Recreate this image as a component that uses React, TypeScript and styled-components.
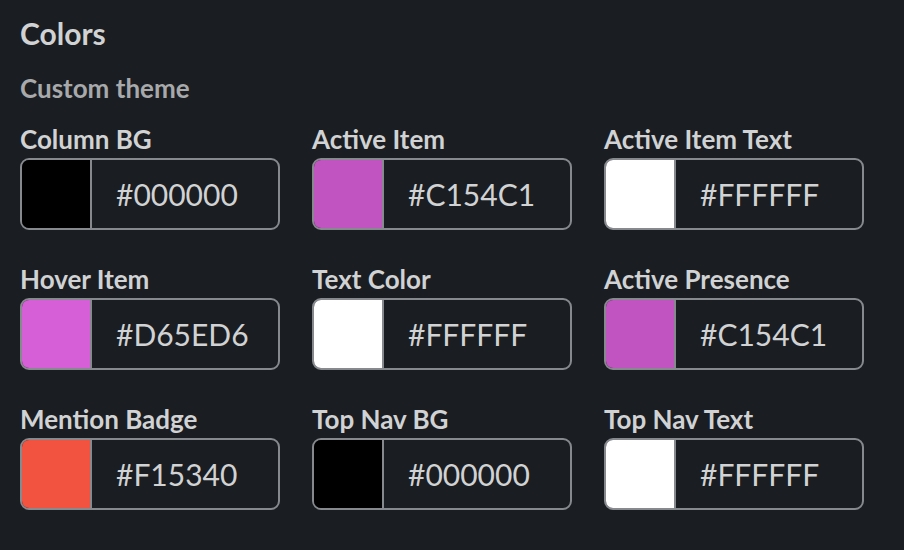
import React from "react";
import styled, { createGlobalStyle } from "styled-components";

const GlobalStyle = createGlobalStyle`
  html, body {
    margin: 0;
    padding: 0;
    background: #1a1d21;
  }
  body {
    font-family: Lato, "Noto Sans", sans-serif;
    -webkit-font-smoothing: antialiased;
  }
`;

const Page = styled.div`
  width: 904px;
  height: 550px;
  box-sizing: border-box;
  padding: 11px 20px 0;
  background: #1a1d21;
  overflow: hidden;
`;

const Title = styled.h2`
  margin: 0;
  font-size: 30px;
  line-height: 44px;
  font-weight: 700;
  color: #d1d2d3;
`;

const Subtitle = styled.h3`
  margin: 16px 0 0;
  font-size: 26px;
  line-height: 34px;
  font-weight: 700;
  color: #a8a9ab;
`;

const Grid = styled.div`
  display: grid;
  grid-template-columns: repeat(3, 260px);
  column-gap: 32px;
  row-gap: 32px;
  margin-top: 17px;
`;

const Field = styled.div`
  display: flex;
  flex-direction: column;
`;

const Label = styled.label`
  font-size: 26px;
  line-height: 34px;
  font-weight: 700;
  color: #d1d2d3;
  margin-bottom: 2px;
`;

const Picker = styled.div`
  display: flex;
  height: 72px;
  box-sizing: border-box;
  border: 2px solid #868a8e;
  border-radius: 9px;
  overflow: hidden;
`;

const Swatch = styled.div<{ $color: string }>`
  width: 68px;
  flex-shrink: 0;
  background: ${(p) => p.$color};
  border-right: 2px solid #868a8e;
`;

const Hex = styled.div`
  flex: 1;
  display: flex;
  align-items: center;
  padding-left: 24px;
  font-size: 30px;
  font-weight: 400;
  color: #d1d2d3;
`;

const colors = [
  { label: "Column BG", value: "#000000" },
  { label: "Active Item", value: "#C154C1" },
  { label: "Active Item Text", value: "#FFFFFF" },
  { label: "Hover Item", value: "#D65ED6" },
  { label: "Text Color", value: "#FFFFFF" },
  { label: "Active Presence", value: "#C154C1" },
  { label: "Mention Badge", value: "#F15340" },
  { label: "Top Nav BG", value: "#000000" },
  { label: "Top Nav Text", value: "#FFFFFF" },
];

export default function App() {
  return (
    <>
      <GlobalStyle />
      <Page>
        <Title>Colors</Title>
        <Subtitle>Custom theme</Subtitle>
        <Grid>
          {colors.map((c) => (
            <Field key={c.label}>
              <Label>{c.label}</Label>
              <Picker>
                <Swatch $color={c.value} />
                <Hex>{c.value}</Hex>
              </Picker>
            </Field>
          ))}
        </Grid>
      </Page>
    </>
  );
}
